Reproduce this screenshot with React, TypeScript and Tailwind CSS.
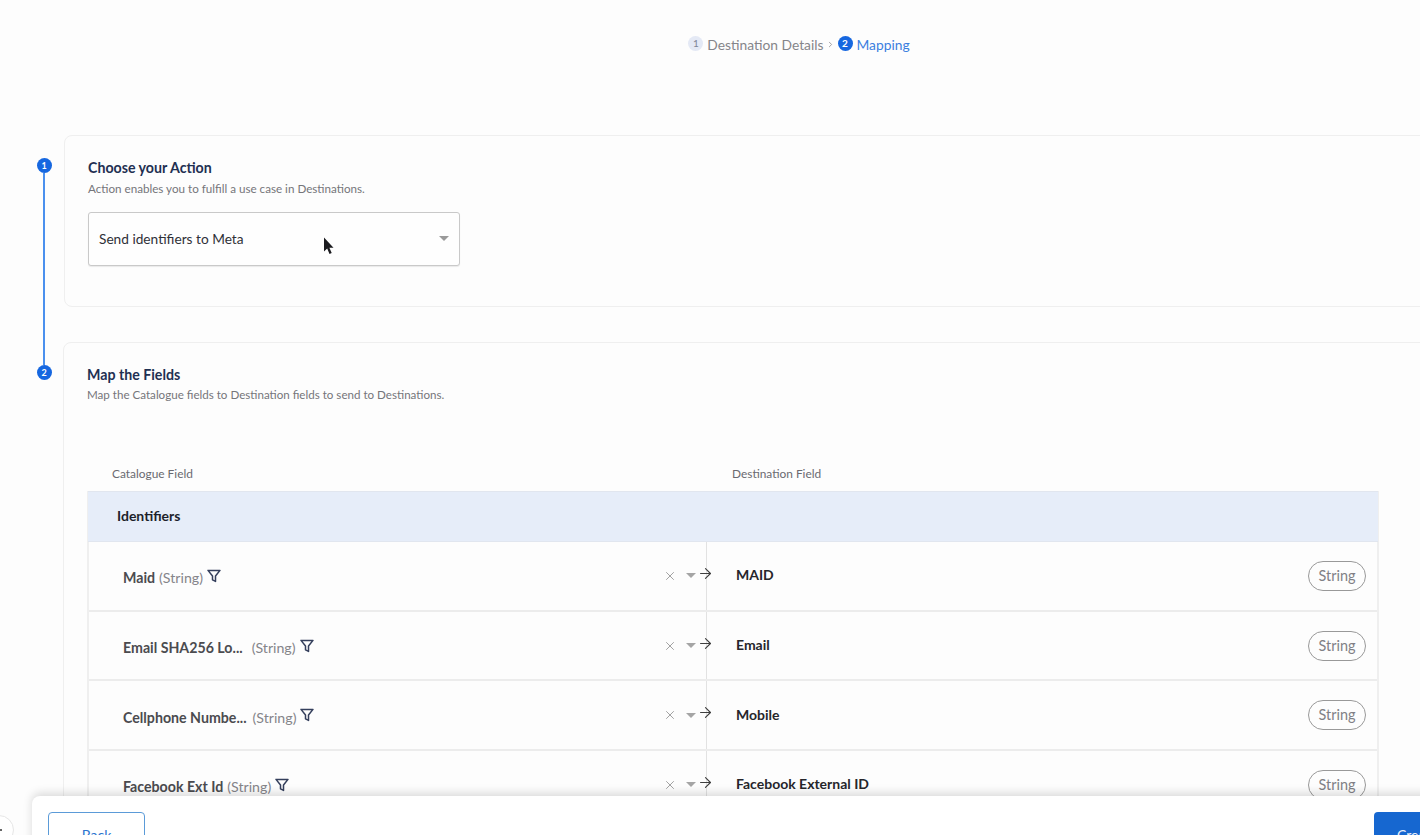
import React from "react";
import { X, ArrowRight, ChevronRight } from "lucide-react";

const font = { fontFamily: '"Lato", "Noto Sans", sans-serif' };

function Funnel() {
  return (
    <svg width="14" height="14" viewBox="0 0 14 14" fill="none" stroke="#343f5c" strokeWidth="1.5" strokeLinejoin="round" className="shrink-0 -mt-1">
      <path d="M1 1.4h12L8.5 7v5.4L5.5 10.8V7z" />
    </svg>
  );
}

function Caret({ className }: { className: string }) {
  return <span className={"w-0 h-0 border-l-[5px] border-r-[5px] border-t-[5px] border-l-transparent border-r-transparent " + className} />;
}

type Row = { name: string; dest: string; gap: string };
const rows: Row[] = [
  { name: "Maid", dest: "MAID", gap: "ml-1" },
  { name: "Email SHA256 Lo...", dest: "Email", gap: "ml-[9px]" },
  { name: "Cellphone Numbe...", dest: "Mobile", gap: "ml-[6px]" },
  { name: "Facebook Ext Id", dest: "Facebook External ID", gap: "ml-1" },
];

function MapRow({ r }: { r: Row }) {
  return (
    <div className="flex h-[69.7px] border-b-2 border-[#ececec] shrink-0">
      <div className="w-[618px] flex items-center pl-[34px] pr-[10px] border-r border-[#e2e2e2] relative">
        <div className="flex items-center flex-1 pt-1">
          <span className="text-[14.2px] font-bold text-[#4b4b4f]">{r.name}</span>
          <span className={"text-[14.2px] text-[#85858a] " + r.gap}>(String)</span>
          <span className="ml-1"><Funnel /></span>
        </div>
        <X size={14} strokeWidth={1.6} className="text-[#9b9b9b] mr-[9px]" />
        <Caret className="border-t-[#a5a5a5]" />
        <ArrowRight size={17} strokeWidth={1.6} className="absolute right-[-8px] top-[23px] text-[#3f3f3f]" />
      </div>
      <div className="flex-1 flex items-center justify-between pl-[29px] pr-[11px]">
        <span className="text-[14px] font-bold text-[#26262b] mb-[2px]">{r.dest}</span>
        <span className="h-[30px] w-[58px] rounded-[15px] border border-[#999999] flex items-center justify-center text-[14.4px] text-[#808085]">String</span>
      </div>
    </div>
  );
}

export default function App() {
  return (
    <div className="w-[1420px] h-[835px] overflow-hidden relative bg-[#fdfdfd]" style={font}>
      <div className="h-[135px] pt-[35px] flex items-start justify-center pl-[178px] text-[13.8px]">
        <span className="w-[15px] h-[15px] rounded-full bg-[#e4e9f5] text-[#7d8597] text-[10px] flex items-center justify-center mt-[1px]">1</span>
        <span className="ml-[4px] text-[#85858a]">Destination Details</span>
        <ChevronRight size={9} strokeWidth={2} className="mx-[2px] mt-[5px] text-[#85858a]" />
        <span className="w-[15px] h-[15px] rounded-full bg-[#1667e0] text-white text-[10px] font-bold flex items-center justify-center mt-[1px] ml-[1px]">2</span>
        <span className="ml-[4px] text-[#3b7fe0]">Mapping</span>
      </div>

      <div className="flex pl-[37px]">
        <div className="w-[14px] flex flex-col items-center pt-[23px] shrink-0">
          <span className="w-[15px] h-[15px] rounded-full bg-[#1667e0] text-white text-[9px] font-bold flex items-center justify-center shrink-0">1</span>
          <span className="w-[1.5px] h-[192px] bg-[#4a90ee] shrink-0" />
          <span className="w-[15px] h-[15px] rounded-full bg-[#1667e0] text-white text-[9px] font-bold flex items-center justify-center shrink-0">2</span>
        </div>

        <div className="ml-[13px] w-[1400px] shrink-0 flex flex-col gap-[35px]">
          <section className="h-[172px] border border-[#efefef] rounded-lg pl-[23px] pt-[23px] bg-[#fdfdfd]">
            <h2 className="text-[14.2px] font-bold text-[#1f3052] leading-[18px]">Choose your Action</h2>
            <p className="text-[11.65px] text-[#75757a] mt-[4px] leading-[16px]">Action enables you to fulfill a use case in Destinations.</p>
            <div className="relative mt-[15px] w-[372px] h-[54px] border border-[#c9c9c9] rounded-[3px] shadow-[0_1px_1px_rgba(0,0,0,0.08)] flex items-center justify-between pl-[10px] pr-[10px] bg-[#fefefe]">
              <span className="text-[13.7px] text-[#2f3037]">Send identifiers to Meta</span>
              <Caret className="border-t-[#9a9a9a] -mt-[1px]" />
              <svg width="12" height="18" viewBox="0 0 12 18" className="absolute left-[234px] top-[24px]">
                <path d="M1 0.5v14l3.2-3 2.3 5.5 2.2-1-2.3-5.2H10.5z" fill="#1b1b1f" />
              </svg>
            </div>
          </section>

          <section className="-ml-[1px] border border-[#efefef] rounded-lg pl-[23px] pt-[23px] h-[600px] bg-[#fdfdfd]">
            <h2 className="text-[14.2px] font-bold text-[#1f3052] leading-[18px]">Map the Fields</h2>
            <p className="text-[11.6px] text-[#75757a] mt-[3px] leading-[16px]">Map the Catalogue fields to Destination fields to send to Destinations.</p>
            <div className="flex mt-[63px] h-[25px] text-[11.9px] text-[#6a6a70] pl-[25px] leading-[16px]">
              <span className="w-[620px]">Catalogue Field</span>
              <span>Destination Field</span>
            </div>
            <div className="w-[1292px] border-x-2 border-[#efefef]">
              <div className="h-[51px] -mx-[1px] bg-[#e6edf9] border-y border-[#e1e6ef] flex items-center pl-[29px] pb-[3px] text-[14px] font-bold text-[#1d1f2b]">Identifiers</div>
              {rows.map((r) => <MapRow key={r.name} r={r} />)}
            </div>
          </section>
        </div>
      </div>

      <div className="absolute left-[32px] top-[796px] w-[1494px] h-[60px] bg-white rounded-tl-lg shadow-[0_-3px_10px_rgba(0,0,0,0.14)] pl-[16px] pt-[16px] flex items-start justify-between pr-[32px]">
        <button className="w-[97px] h-[46px] rounded border border-[#5b9bd8] text-[#2b74cf] text-[14px] leading-[40px]">Back</button>
        <button className="w-[120px] h-[46px] rounded bg-[#1667d0] text-[#e9f1fb] text-[14px] text-left pl-[23px] leading-[40px]">Create</button>
      </div>
      <div className="absolute left-[-16px] top-[815px] w-[30px] h-[30px] rounded-full bg-white border border-[#e6e6e6]" />
      <span className="absolute left-0 top-[829px] w-[2px] h-[2px] rounded-full bg-[#333333]" />
    </div>
  );
}
